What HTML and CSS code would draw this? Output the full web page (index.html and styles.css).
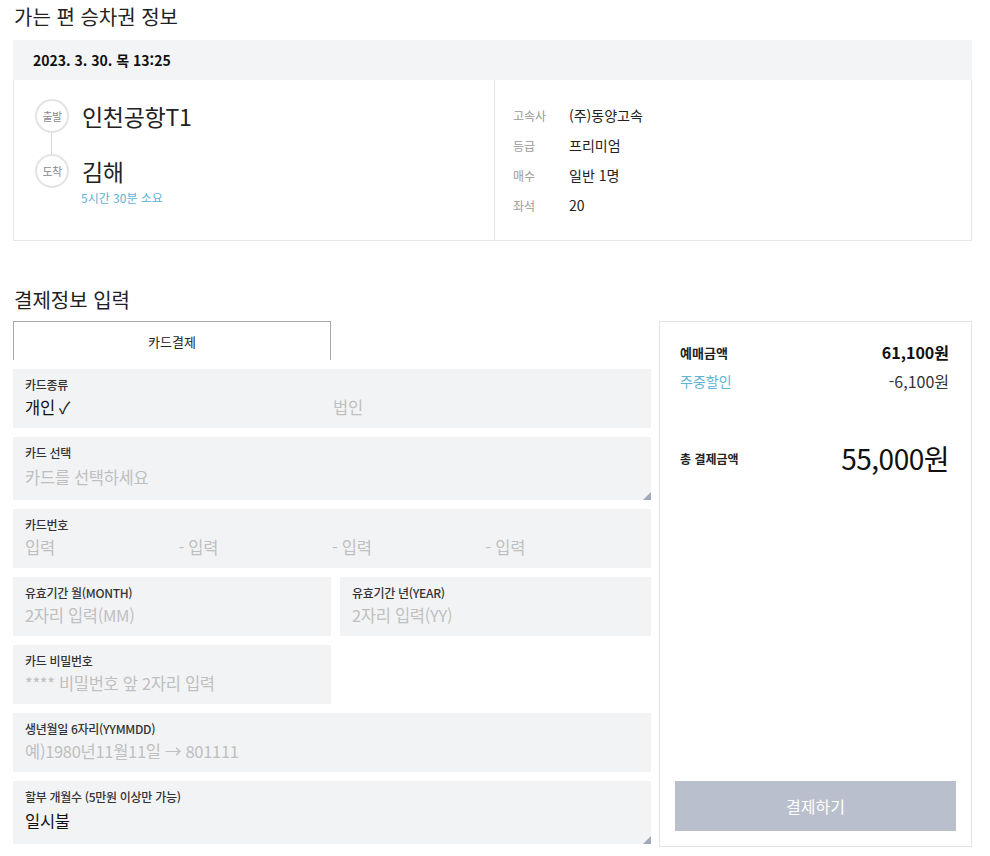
FILE: index.html
```html
<!DOCTYPE html>
<html lang="ko">
<head>
<meta charset="utf-8">
<title>승차권 결제</title>
<link rel="stylesheet" href="styles.css">
</head>
<body>
<div class="page">
  <h2 class="sec-title">가는 편 승차권 정보</h2>
  <div class="ticket">
    <div class="ticket-head">2023. 3. 30. 목 13:25</div>
    <div class="ticket-body">
      <div class="route">
        <div class="stop">
          <span class="dot">출발</span>
          <span class="place">인천공항T1</span>
        </div>
        <div class="link"></div>
        <div class="stop">
          <span class="dot">도착</span>
          <span class="place">김해</span>
        </div>
        <div class="duration">5시간 30분 소요</div>
      </div>
      <dl class="info">
        <div class="info-row"><dt>고속사</dt><dd>(주)동양고속</dd></div>
        <div class="info-row"><dt>등급</dt><dd>프리미엄</dd></div>
        <div class="info-row"><dt>매수</dt><dd>일반 1명</dd></div>
        <div class="info-row"><dt>좌석</dt><dd>20</dd></div>
      </dl>
    </div>
  </div>

  <h2 class="sec-title sec-title-2">결제정보 입력</h2>
  <div class="pay">
    <div class="form">
      <div class="tabs"><div class="tab">카드결제</div></div>

      <div class="field">
        <div class="label">카드종류</div>
        <div class="value two">
          <span class="on">개인 ✓</span>
          <span class="ph">법인</span>
        </div>
      </div>

      <div class="field tall corner">
        <div class="label">카드 선택</div>
        <div class="value ph">카드를 선택하세요</div>
      </div>

      <div class="field">
        <div class="label">카드번호</div>
        <div class="value four">
          <span class="ph">입력</span>
          <span class="ph">- 입력</span>
          <span class="ph">- 입력</span>
          <span class="ph">- 입력</span>
        </div>
      </div>

      <div class="pair">
        <div class="field">
          <div class="label">유효기간 월(MONTH)</div>
          <div class="value ph">2자리 입력(MM)</div>
        </div>
        <div class="field">
          <div class="label">유효기간 년(YEAR)</div>
          <div class="value ph">2자리 입력(YY)</div>
        </div>
      </div>

      <div class="pair">
        <div class="field">
          <div class="label">카드 비밀번호</div>
          <div class="value ph">**** 비밀번호 앞 2자리 입력</div>
        </div>
      </div>

      <div class="field">
        <div class="label">생년월일 6자리(YYMMDD)</div>
        <div class="value ph">예)1980년11월11일 → 801111</div>
      </div>

      <div class="field tall corner">
        <div class="label">할부 개월수 (5만원 이상만 가능)</div>
        <div class="value on">일시불</div>
      </div>
    </div>

    <aside class="summary">
      <div class="sum-row">
        <span class="sum-label strong">예매금액</span>
        <span class="sum-val strong">61,100원</span>
      </div>
      <div class="sum-row sum-row-2">
        <span class="sum-label blue">주중할인</span>
        <span class="sum-val">-6,100원</span>
      </div>
      <div class="sum-row total">
        <span class="sum-label strong small">총 결제금액</span>
        <span class="total-val">55,000원</span>
      </div>
      <button class="pay-btn" type="button">결제하기</button>
    </aside>
  </div>
</div>
</body>
</html>
```

FILE: styles.css
```css
* { box-sizing: border-box; }
html, body { margin: 0; padding: 0; background: #fff; }
body {
  font-family: "Noto Sans CJK KR", "Noto Sans", sans-serif;
  color: #222;
}
.page {
  width: 990px;
  padding: 0 18px 0 13px;
}
.sec-title {
  margin: 0;
  font-size: 20px;
  font-weight: 400;
  line-height: 34px;
  height: 40px;
  padding-left: 1px;
  color: #222;
}
.sec-title-2 {
  margin-top: 42px;
  height: 38px;
}

/* ticket */
.ticket-head {
  height: 40px;
  background: #f3f4f6;
  padding-left: 20px;
  font-size: 14px;
  font-weight: 700;
  line-height: 40px;
  color: #111;
}
.ticket-body {
  display: grid;
  grid-template-columns: 480px 1fr;
  height: 161px;
  border: 1px solid #e6e6e6;
  border-top: none;
}
.route {
  padding: 19px 0 0 21px;
}
.stop {
  display: flex;
  align-items: center;
  height: 34px;
}
.dot {
  width: 34px;
  height: 34px;
  border: 2px solid #e4e4e4;
  border-radius: 50%;
  font-size: 11px;
  color: #8a8a8a;
  display: flex;
  align-items: center;
  justify-content: center;
  flex: none;
  letter-spacing: -0.5px;
}
.place {
  margin-left: 13px;
  font-size: 23px;
  line-height: 30px;
  color: #222;
  letter-spacing: -0.3px;
}
.link {
  width: 1px;
  height: 21px;
  background: #d6d6d6;
  margin-left: 16px;
}
.duration {
  margin-left: 46px;
  margin-top: 2px;
  font-size: 12px;
  line-height: 16px;
  color: #5cb3d4;
}
.info {
  margin: 0;
  border-left: 1px solid #e6e6e6;
  padding: 20px 0 0 18px;
}
.info-row {
  display: flex;
  align-items: center;
  height: 30px;
}
.info-row dt {
  width: 56px;
  font-size: 12px;
  color: #9a9a9a;
}
.info-row dd {
  margin: 0;
  font-size: 14px;
  color: #222;
}

/* payment */
.pay {
  display: grid;
  grid-template-columns: 638px 1fr;
  gap: 8px;
  align-items: start;
}
.form {
  display: flex;
  flex-direction: column;
  gap: 9px;
}
.tabs {
  height: 39px;
}
.tab {
  width: 318px;
  height: 39px;
  border: 1px solid #a9a9a9;
  border-bottom: none;
  text-align: center;
  font-size: 13px;
  line-height: 39px;
  color: #222;
}
.field {
  position: relative;
  height: 59px;
  background: #f2f3f5;
  padding: 7px 12px 0;
}
.field.tall { height: 63px; }
.corner::after {
  content: "";
  position: absolute;
  right: 0;
  bottom: 0;
  width: 0;
  height: 0;
  border-style: solid;
  border-width: 0 0 8px 8px;
  border-color: transparent transparent #a3a8b6 transparent;
}
.label {
  font-size: 12px;
  font-weight: 500;
  line-height: 18px;
  color: #333;
  letter-spacing: -0.3px;
}
.value {
  font-size: 16.5px;
  line-height: 26px;
  letter-spacing: -0.3px;
}
.field.tall .value { line-height: 30px; }
.ph { color: #bfbfbf; }
.on { color: #111; }
.two {
  display: grid;
  grid-template-columns: 308px 1fr;
}
.four {
  display: grid;
  grid-template-columns: repeat(4, 153.5px);
}
.pair {
  display: grid;
  grid-template-columns: 318px 1fr;
  gap: 9px;
}

/* summary */
.summary {
  height: 526px;
  border: 1px solid #e3e3e3;
  display: flex;
  flex-direction: column;
  padding: 18px 15px 15px;
}
.sum-row {
  display: flex;
  justify-content: space-between;
  align-items: center;
  height: 24px;
  padding: 0 7px 0 5px;
}
.sum-row-2 { margin-top: 5px; }
.sum-label { font-size: 13px; color: #222; }
.sum-label.small { font-size: 12px; }
.sum-label.strong { font-weight: 700; }
.sum-label.blue { color: #5cb3d4; font-size: 14px; }
.sum-val { font-size: 16px; color: #333; }
.sum-val.strong { font-weight: 700; color: #111; }
.total {
  margin-top: 47px;
  height: 36px;
}
.total-val {
  font-size: 28px;
  color: #111;
  letter-spacing: -0.5px;
}
.pay-btn {
  margin-top: auto;
  height: 50px;
  width: 100%;
  border: none;
  background: #b9bfcc;
  color: #fff;
  font-family: inherit;
  font-size: 16px;
  cursor: pointer;
}
```
